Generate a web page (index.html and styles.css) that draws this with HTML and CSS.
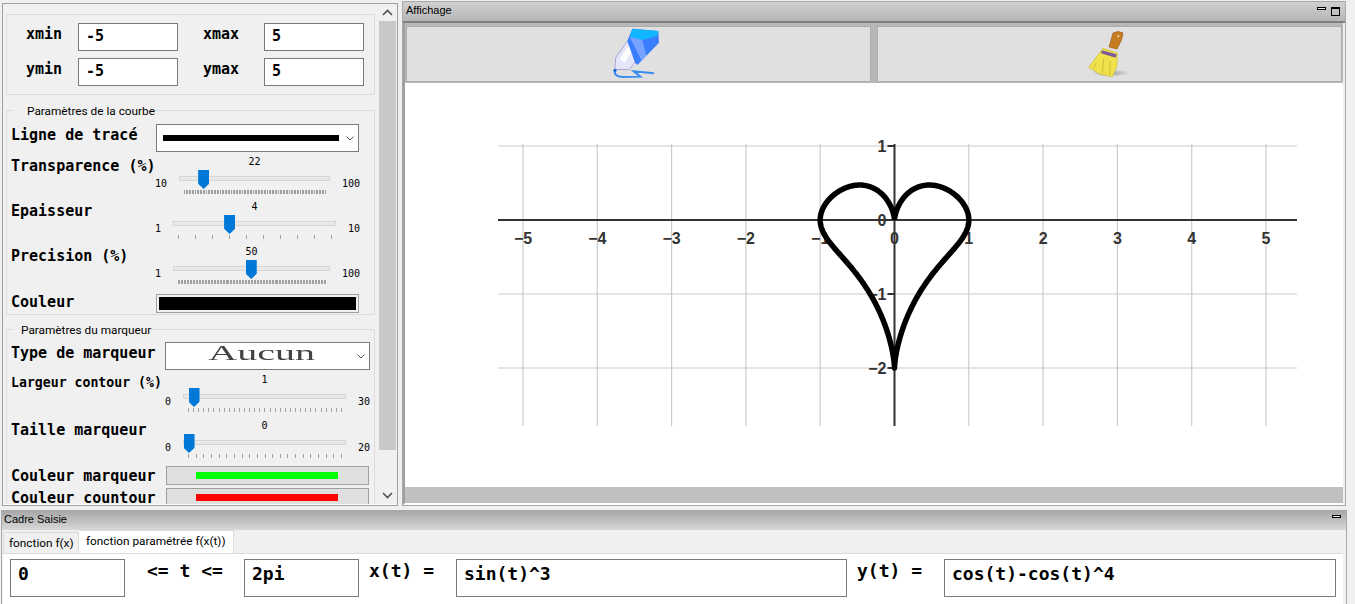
FILE: index.html
```html
<!DOCTYPE html>
<html lang="fr">
<head>
    <meta charset="UTF-8">
    <title>Traceur de courbes</title>
    <link rel="stylesheet" href="styles.css">
</head>
<body>

<div class="top-row">

    <!-- Panneau des parametres -->
    <div class="dock-params">
        <div class="params-inner">
            <div class="form-panel">

                <div class="group bounds">
                    <span class="bold-label">xmin</span>
                    <input class="line-edit" type="text" value="-5" readonly>
                    <span class="bold-label">xmax</span>
                    <input class="line-edit" type="text" value="5" readonly>
                    <span class="bold-label">ymin</span>
                    <input class="line-edit" type="text" value="-5" readonly>
                    <span class="bold-label">ymax</span>
                    <input class="line-edit" type="text" value="5" readonly>
                </div>

                <div class="group group-curve">
                    <div class="group-title">Paramètres de la courbe</div>

                    <div class="row first-row">
                        <span class="bold-label row-label">Ligne de tracé</span>
                        <div class="combo combo-line">
                            <span class="line-sample"></span>
                            <svg class="chevron" width="8" height="5" viewBox="0 0 8 5"><path d="M0.5 0.5 L4 4 L7.5 0.5"/></svg>
                        </div>
                    </div>

                    <div class="row">
                        <span class="bold-label row-label">Transparence (%)</span>
                        <div class="slider">
                            <span class="slider-value">22</span>
                            <span class="slider-end">10</span>
                            <div class="track"><span class="thumb" style="--pos: 0.133"></span></div>
                            <span class="slider-end">100</span>
                            <div class="ticks" style="--pitch: 1.567px"></div>
                        </div>
                    </div>

                    <div class="row">
                        <span class="bold-label row-label">Epaisseur</span>
                        <div class="slider">
                            <span class="slider-value">4</span>
                            <span class="slider-end">1</span>
                            <div class="track"><span class="thumb" style="--pos: 0.333"></span></div>
                            <span class="slider-end">10</span>
                            <div class="ticks" style="--pitch: 17px"></div>
                        </div>
                    </div>

                    <div class="row">
                        <span class="bold-label row-label">Precision (%)</span>
                        <div class="slider">
                            <span class="slider-value">50</span>
                            <span class="slider-end">1</span>
                            <div class="track"><span class="thumb" style="--pos: 0.495"></span></div>
                            <span class="slider-end">100</span>
                            <div class="ticks" style="--pitch: 1.485px"></div>
                        </div>
                    </div>

                    <div class="row row-color">
                        <span class="bold-label row-label">Couleur</span>
                        <div class="swatch"><span class="swatch-fill"></span></div>
                    </div>
                </div>

                <div class="group group-marker">
                    <div class="group-title title-marker">Paramètres du marqueur</div>

                    <div class="row first-row">
                        <span class="bold-label row-label">Type de marqueur</span>
                        <div class="combo combo-marker">
                            <span class="marker-name"><span>Aucun</span></span>
                            <svg class="chevron" width="8" height="5" viewBox="0 0 8 5"><path d="M0.5 0.5 L4 4 L7.5 0.5"/></svg>
                        </div>
                    </div>

                    <div class="row">
                        <span class="bold-label row-label label-small">Largeur contour (%)</span>
                        <div class="slider">
                            <span class="slider-value">1</span>
                            <span class="slider-end">0</span>
                            <div class="track"><span class="thumb" style="--pos: 0.033"></span></div>
                            <span class="slider-end">30</span>
                            <div class="ticks" style="--pitch: 5.1px"></div>
                        </div>
                    </div>

                    <div class="row">
                        <span class="bold-label row-label">Taille marqueur</span>
                        <div class="slider">
                            <span class="slider-value">0</span>
                            <span class="slider-end">0</span>
                            <div class="track"><span class="thumb" style="--pos: 0"></span></div>
                            <span class="slider-end">20</span>
                            <div class="ticks" style="--pitch: 7.65px"></div>
                        </div>
                    </div>

                    <div class="row row-button">
                        <span class="bold-label row-label">Couleur marqueur</span>
                        <div class="color-button"><span class="color-bar bar-green"></span></div>
                    </div>
                    <div class="row row-button">
                        <span class="bold-label row-label">Couleur countour</span>
                        <div class="color-button"><span class="color-bar bar-red"></span></div>
                    </div>
                </div>

            </div>

            <div class="scrollbar">
                <div class="scroll-arrow">
                    <svg width="11" height="7" viewBox="0 0 11 7"><path d="M1 6 L5.5 1.5 L10 6"/></svg>
                </div>
                <div class="scroll-track"><div class="scroll-thumb"></div></div>
                <div class="scroll-arrow">
                    <svg width="11" height="7" viewBox="0 0 11 7"><path d="M1 1 L5.5 5.5 L10 1"/></svg>
                </div>
            </div>
        </div>
    </div>

    <!-- Zone d'affichage du graphe -->
    <div class="dock-display">
        <div class="dock-title title-display">
            <span>Affichage</span>
            <div class="dock-buttons">
                <span class="btn-min"></span>
                <span class="btn-float"></span>
            </div>
        </div>
        <div class="display-body">
            <div class="tool-buttons">
                <div class="tool-button">
                    <!-- gomme -->
                    <svg class="icon-eraser" width="50" height="56" viewBox="0 0 150 168">
                        <path d="M18 134 Q14 152 42 153 L94 152 L74 136 L135 142" fill="none" stroke="#3b8cf0" stroke-width="6"/>
                        <path d="M55 45 L20 95 L18 130 L60 131 L92 92 Z" fill="#e6e6fb" stroke="#a8a8d8" stroke-width="3"/>
                        <path d="M32 98 L60 60 L72 72 L46 110 Z" fill="#fff"/>
                        <path d="M70 8 L148 15 L150 50 L85 117 L78 110 L55 45 Z" fill="#3b7dff"/>
                        <path d="M70 8 L148 15 L144 30 L100 42 L62 32 Z" fill="#12b5ff"/>
                        <path d="M62 32 L100 42 L112 90 L98 104 Z" fill="#8fb4ff" opacity="0.7"/>
                        <circle cx="18" cy="133" r="5" fill="#1f66d8"/>
                    </svg>
                </div>
                <div class="tool-button">
                    <!-- balai -->
                    <svg class="icon-broom" width="44" height="50" viewBox="0 0 130 150">
                        <defs>
                            <radialGradient id="ombre">
                                <stop offset="0" stop-color="#999"/>
                                <stop offset="1" stop-color="#999" stop-opacity="0"/>
                            </radialGradient>
                        </defs>
                        <ellipse cx="72" cy="132" rx="56" ry="11" fill="url(#ombre)"/>
                        <path d="M80 12 Q96 3 110 12 L106 32 L92 60 L68 54 Z" fill="#c87c22" stroke="#9a5c18" stroke-width="2"/>
                        <circle cx="96" cy="22" r="3" fill="#e8e0d0"/>
                        <path d="M50 58 L93 72 L92 112 L78 143 L42 136 L7 115 Z" fill="#efe24a" stroke="#c9b938" stroke-width="2"/>
                        <path d="M30 100 L22 118 M52 90 L48 132 M72 95 L70 138" stroke="#cdbd38" stroke-width="3" fill="none"/>
                        <path d="M47 64 L91 76 L88 86 L44 73 Z" fill="#7d5a9a"/>
                    </svg>
                </div>
            </div>
            <div class="plot-area">
                <svg id="plot" width="938" height="404" viewBox="0 0 938 404"></svg>
            </div>
            <div class="hscroll"></div>
        </div>
    </div>
</div>

<!-- Saisie de la fonction -->
<div class="dock-input">
    <div class="dock-title title-input">
        <span>Cadre Saisie</span>
        <div class="dock-buttons">
            <span class="btn-min"></span>
        </div>
    </div>
    <div class="tab-bar">
        <span class="tab">fonction f(x)</span>
        <span class="tab tab-active">fonction paramétrée f(x(t))</span>
    </div>
    <div class="tab-page">
        <input class="big-edit edit-short" type="text" value="0" readonly>
        <span class="big-label label-range">&lt;= t &lt;=</span>
        <input class="big-edit edit-short" type="text" value="2pi" readonly>
        <span class="big-label label-func">x(t) =</span>
        <input class="big-edit edit-long" type="text" value="sin(t)^3" readonly>
        <span class="big-label label-func">y(t) =</span>
        <input class="big-edit edit-long" type="text" value="cos(t)-cos(t)^4" readonly>
    </div>
</div>

<script src="plot.js"></script>
</body>
</html>
```

FILE: styles.css
```css
* {
    box-sizing: border-box;
}
html, body {
    height: 100%;
}
body {
    margin: 0;
    overflow: hidden;
    background-color: #f0f0f0;
    color: #000;
    font-family: Roboto, sans-serif;
}

.top-row {
    display: flex;
    align-items: flex-start;
    gap: 4px;
    height: 506px;
    padding-left: 2px;
}

/* panneau de gauche */
.dock-params {
    width: 396px;
    height: 503px;
    margin-top: 3px;
    border: 1px solid #a0a0a0;
    overflow: hidden;
}
.params-inner {
    display: flex;
    height: 501px;
    border-bottom: 1px solid #fff;
    overflow: hidden;
}
.form-panel {
    width: 375px;
    flex: none;
    padding: 10px 3px 0 3px;
}
.scrollbar {
    width: 17px;
    margin-left: 1px;
    display: flex;
    flex-direction: column;
}
.scroll-arrow {
    height: 17px;
    display: flex;
    align-items: center;
    justify-content: center;
}
.scroll-arrow path {
    fill: none;
    stroke: #505050;
    stroke-width: 1.6;
}
.scroll-track {
    flex: 1;
}
.scroll-thumb {
    height: 429px;
    background-color: #c8c8c8;
}

.group {
    border: 1px solid #dcdcdc;
}
.bounds {
    display: grid;
    grid-template-columns: 52px 100px 86px 100px;
    row-gap: 7px;
    padding: 8px 0 8px 19px;
}
.bounds .bold-label {
    line-height: 23px;
}
.bounds .bold-label:nth-child(3),
.bounds .bold-label:nth-child(7) {
    margin-left: 25px;
}
.bold-label {
    font-family: "DejaVu Sans Mono", monospace;
    font-weight: bold;
    font-size: 15px;
    line-height: 22px;
    white-space: nowrap;
}
.line-edit {
    width: 100px;
    height: 28px;
    border: 1px solid #7a7a7a;
    background: #fff;
    padding: 0 0 2px 7px;
    font-family: "DejaVu Sans Mono", monospace;
    font-weight: bold;
    font-size: 15px;
    color: #000;
    outline: none;
}

.group-curve {
    height: 205px;
    margin-top: 15px;
    padding: 0 0 0 4px;
}
.group-marker {
    height: 200px;
    margin-top: 14px;
    padding: 0 0 0 4px;
    border-bottom: none;
}
.group-title {
    width: fit-content;
    margin: -9px 0 0 3px;
    padding: 0 0 0 13px;
    background-color: #f0f0f0;
    font-size: 11.8px;
    line-height: 18px;
}
.title-marker {
    padding-left: 7px;
}

.row {
    display: flex;
    align-items: flex-start;
}
.first-row {
    margin-top: 4px;
    margin-bottom: 3px;
}
.group-marker .first-row {
    margin-top: 3px;
}
.row-label {
    width: 144px;
    flex: none;
}
.group-marker .row-label {
    width: 154px;
}
.group-marker .label-small {
    font-size: 13.2px;
    line-height: 20px;
}

.combo {
    display: flex;
    align-items: center;
    height: 28px;
    border: 1px solid #7a7a7a;
    background: #fff;
}
.chevron path {
    fill: none;
    stroke: #555;
    stroke-width: 1;
}
.combo-line {
    width: 203px;
    margin-left: 1px;
    padding-left: 6px;
}
.line-sample {
    width: 176px;
    height: 6px;
    margin-right: 7px;
    background-color: #000;
}
.combo-marker {
    width: 205px;
}
.marker-name {
    width: 191px;
    padding-bottom: 7px;
    text-align: center;
    font-family: "Liberation Serif", serif;
    font-size: 20px;
    line-height: 20px;
    color: #444;
    filter: blur(0.4px);
}
.marker-name span {
    display: inline-block;
    transform: scaleX(2);
}

/* curseurs */
.slider {
    display: grid;
    grid-template-columns: auto 1fr auto;
    grid-template-rows: 12px 23px 4px;
    column-gap: 12px;
    width: 205px;
    padding-bottom: 6px;
    box-sizing: content-box;
    font-family: "DejaVu Sans Mono", monospace;
    font-size: 10px;
    line-height: 12px;
}
.group-marker .slider {
    padding-bottom: 7px;
}
.slider-value {
    grid-column: 2;
    grid-row: 1;
    line-height: 14px;
    text-align: center;
}
.slider-end {
    grid-row: 2;
    align-self: end;
}
.track {
    grid-row: 2;
    position: relative;
    height: 5px;
    margin-top: 9px;
    background-color: #e7eae7;
    border: 1px solid #d6d6d6;
}
.thumb {
    position: absolute;
    left: calc(var(--pos) * (100% - 9px) - 0.5px);
    top: -7px;
    width: 11px;
    height: 19px;
    background-color: #0078d7;
    clip-path: polygon(0 0, 100% 0, 100% 72%, 50% 100%, 0 72%);
}
.ticks {
    grid-column: 2;
    grid-row: 3;
    margin: 0 4px 0 5px;
    background: repeating-linear-gradient(90deg, #a0a0a0 0, #a0a0a0 1px, transparent 1px, transparent var(--pitch));
}

.row-color {
    align-items: center;
    margin-top: 1px;
}
.row-color .row-label {
    margin-bottom: 2px;
}
.swatch {
    width: 203px;
    height: 19px;
    margin-left: 1px;
    padding: 2px;
    border: 1px solid #a0a0a0;
}
.swatch-fill {
    display: block;
    height: 100%;
    background-color: #000;
}

.row-button {
    align-items: center;
    height: 19px;
    margin-bottom: 3px;
}
.row-button .bold-label {
    margin-top: 2px;
    line-height: 13px;
}
.row-button:nth-last-child(2) {
    margin-top: 1px;
}
.color-button {
    display: flex;
    align-items: center;
    justify-content: center;
    width: 203px;
    height: 19px;
    margin-left: 1px;
    padding-right: 2px;
    background-color: #dfdfdf;
    border: 1px solid #a0a0a0;
}
.color-bar {
    width: 142px;
    height: 7px;
}
.bar-green {
    background-color: #00ff00;
}
.bar-red {
    background-color: #ff0000;
}

/* barres de titre */
.dock-title {
    display: flex;
    justify-content: space-between;
    font-family: "Liberation Sans", sans-serif;
    font-size: 11px;
}
.dock-buttons {
    display: flex;
    align-items: flex-start;
    gap: 5px;
    padding: 5px 5px 0 0;
}
.btn-min {
    width: 9px;
    height: 3px;
    border: 1px solid #000;
    background: #e8e8e8;
}
.btn-float {
    width: 9px;
    height: 9px;
    border: 1px solid #000;
    border-top-width: 2px;
}
.title-display {
    height: 21px;
    line-height: 16px;
    padding-left: 3px;
    background: linear-gradient(#d0d0d0, #b6b6b6);
    border-bottom: 2px solid #808080;
}

/* zone d'affichage */
.dock-display {
    display: flex;
    flex-direction: column;
    width: 944px;
    height: 505px;
    margin-top: 1px;
    border: 1px solid #a8a8a8;
}
.display-body {
    flex: 1;
    display: flex;
    flex-direction: column;
    margin-right: 2px;
    border-left: 2px solid #a0a0a0;
    border-bottom: 2px solid #fff;
}
.tool-buttons {
    display: flex;
    gap: 6px;
    padding: 3px 0 1px 1px;
    background-color: #b8b8b8;
}
.tool-button {
    display: flex;
    align-items: center;
    justify-content: center;
    width: 465px;
    height: 56px;
    background-color: #e0e0e0;
    border: 1px solid #adadad;
}
.icon-eraser {
    margin-right: 9px;
}
.icon-broom {
    margin-right: 4px;
}
.plot-area {
    flex: 1;
    background-color: #fff;
}
#plot {
    display: block;
}
#plot text {
    font-family: "Liberation Sans", sans-serif;
    font-weight: bold;
    font-size: 16px;
    fill: #333;
}
.hscroll {
    height: 16px;
    background-color: #c0c0c0;
}

/* cadre de saisie */
.dock-input {
    width: 1346px;
    height: 94px;
    margin: 4px 0 0 1px;
    border: 1px solid #a8a8a8;
    border-bottom: none;
}
.title-input {
    height: 19px;
    line-height: 17px;
    padding-left: 2px;
    background: linear-gradient(#a8a8a8, #d8d8d8);
}
.title-input .dock-buttons {
    padding: 4px 5px 0 0;
}
.tab-bar {
    display: flex;
    align-items: flex-end;
    height: 23px;
    padding-left: 1px;
}
.tab {
    width: 76px;
    height: 21px;
    padding-left: 5px;
    border: 1px solid #d9d9d9;
    border-bottom: none;
    font-size: 11.8px;
    line-height: 21px;
    white-space: nowrap;
}
.tab-active {
    width: 155px;
    height: 23px;
    padding-left: 7px;
    border-color: #dcdcdc;
    border-left: none;
    background-color: #fff;
    line-height: 20px;
}
.tab-page {
    display: flex;
    align-items: flex-start;
    width: 1340px;
    height: 51px;
    margin-left: 1px;
    padding: 5px 0 0 7px;
    background-color: #fff;
    border-top: 1px solid #dcdcdc;
}
.big-edit {
    flex: none;
    height: 38px;
    padding: 0 0 10px 7px;
    border: 1px solid #7a7a7a;
    background: #fff;
    font-family: "DejaVu Sans Mono", monospace;
    font-weight: bold;
    font-size: 18px;
    color: #000;
    outline: none;
}
.edit-short {
    width: 115px;
}
.edit-long {
    width: 391px;
}
.edit-long:last-child {
    width: 392px;
}
.big-label {
    flex: none;
    font-family: "DejaVu Sans Mono", monospace;
    font-weight: bold;
    font-size: 18px;
    line-height: 24px;
    margin-right: 21px;
    white-space: pre;
}
.label-range {
    margin-left: 22px;
    margin-right: 20px;
    width: 77px;
}
.label-func {
    margin-left: 10px;
    width: 66px;
}
```

FILE: plot.js
```js
// Dessine le repere et la courbe parametree dans le svg
const svg = document.getElementById('plot');
const NS = 'http://www.w3.org/2000/svg';

const originX = 489.5;
const originY = 137;
const scaleX = 74.3;
const scaleY = 74;

function ajouter(nom, attributs, texte) {
    const el = document.createElementNS(NS, nom);
    for (const cle in attributs) {
        el.setAttribute(cle, attributs[cle]);
    }
    if (texte) el.textContent = texte;
    svg.appendChild(el);
}

function ligne(x1, y1, x2, y2, couleur, largeur) {
    ajouter('line', { x1, y1, x2, y2, stroke: couleur, 'stroke-width': largeur });
}

function etiquette(n) {
    return n < 0 ? '\u2212' + (-n) : String(n);
}

// Grille
for (let i = -5; i <= 5; i++) {
    const x = originX + i * scaleX;
    ligne(x, 61, x, 343, '#cccccc', 1.2);
}
for (let j = -2; j <= 1; j++) {
    const y = originY - j * scaleY;
    ligne(93, y, 892, y, '#cccccc', 1.2);
}

// Axes
ligne(93, originY, 892, originY, '#333333', 2);
ligne(originX, 61, originX, 343, '#333333', 2);

// Graduations
for (let i = -5; i <= 5; i++) {
    ajouter('text', { x: originX + i * scaleX, y: originY + 24, 'text-anchor': 'middle' }, etiquette(i));
}
for (let j = -2; j <= 1; j++) {
    const y = originY - j * scaleY;
    ajouter('text', { x: originX - 8, y: y + 6, 'text-anchor': 'end' }, etiquette(j));
    if (j !== 0) ligne(originX - 7, y, originX, y, '#333333', 2);
}

// Courbe x = sin(t)^3, y = cos(t) - cos(t)^4
let points = '';
for (let k = 0; k <= 400; k++) {
    const t = (k / 400) * 2 * Math.PI;
    const x = Math.pow(Math.sin(t), 3);
    const y = Math.cos(t) - Math.pow(Math.cos(t), 4);
    points += (originX + x * scaleX).toFixed(2) + ',' + (originY - y * scaleY).toFixed(2) + ' ';
}
ajouter('polyline', {
    points,
    fill: 'none',
    stroke: '#000',
    'stroke-width': 5.5,
    'stroke-linejoin': 'round'
});
```
